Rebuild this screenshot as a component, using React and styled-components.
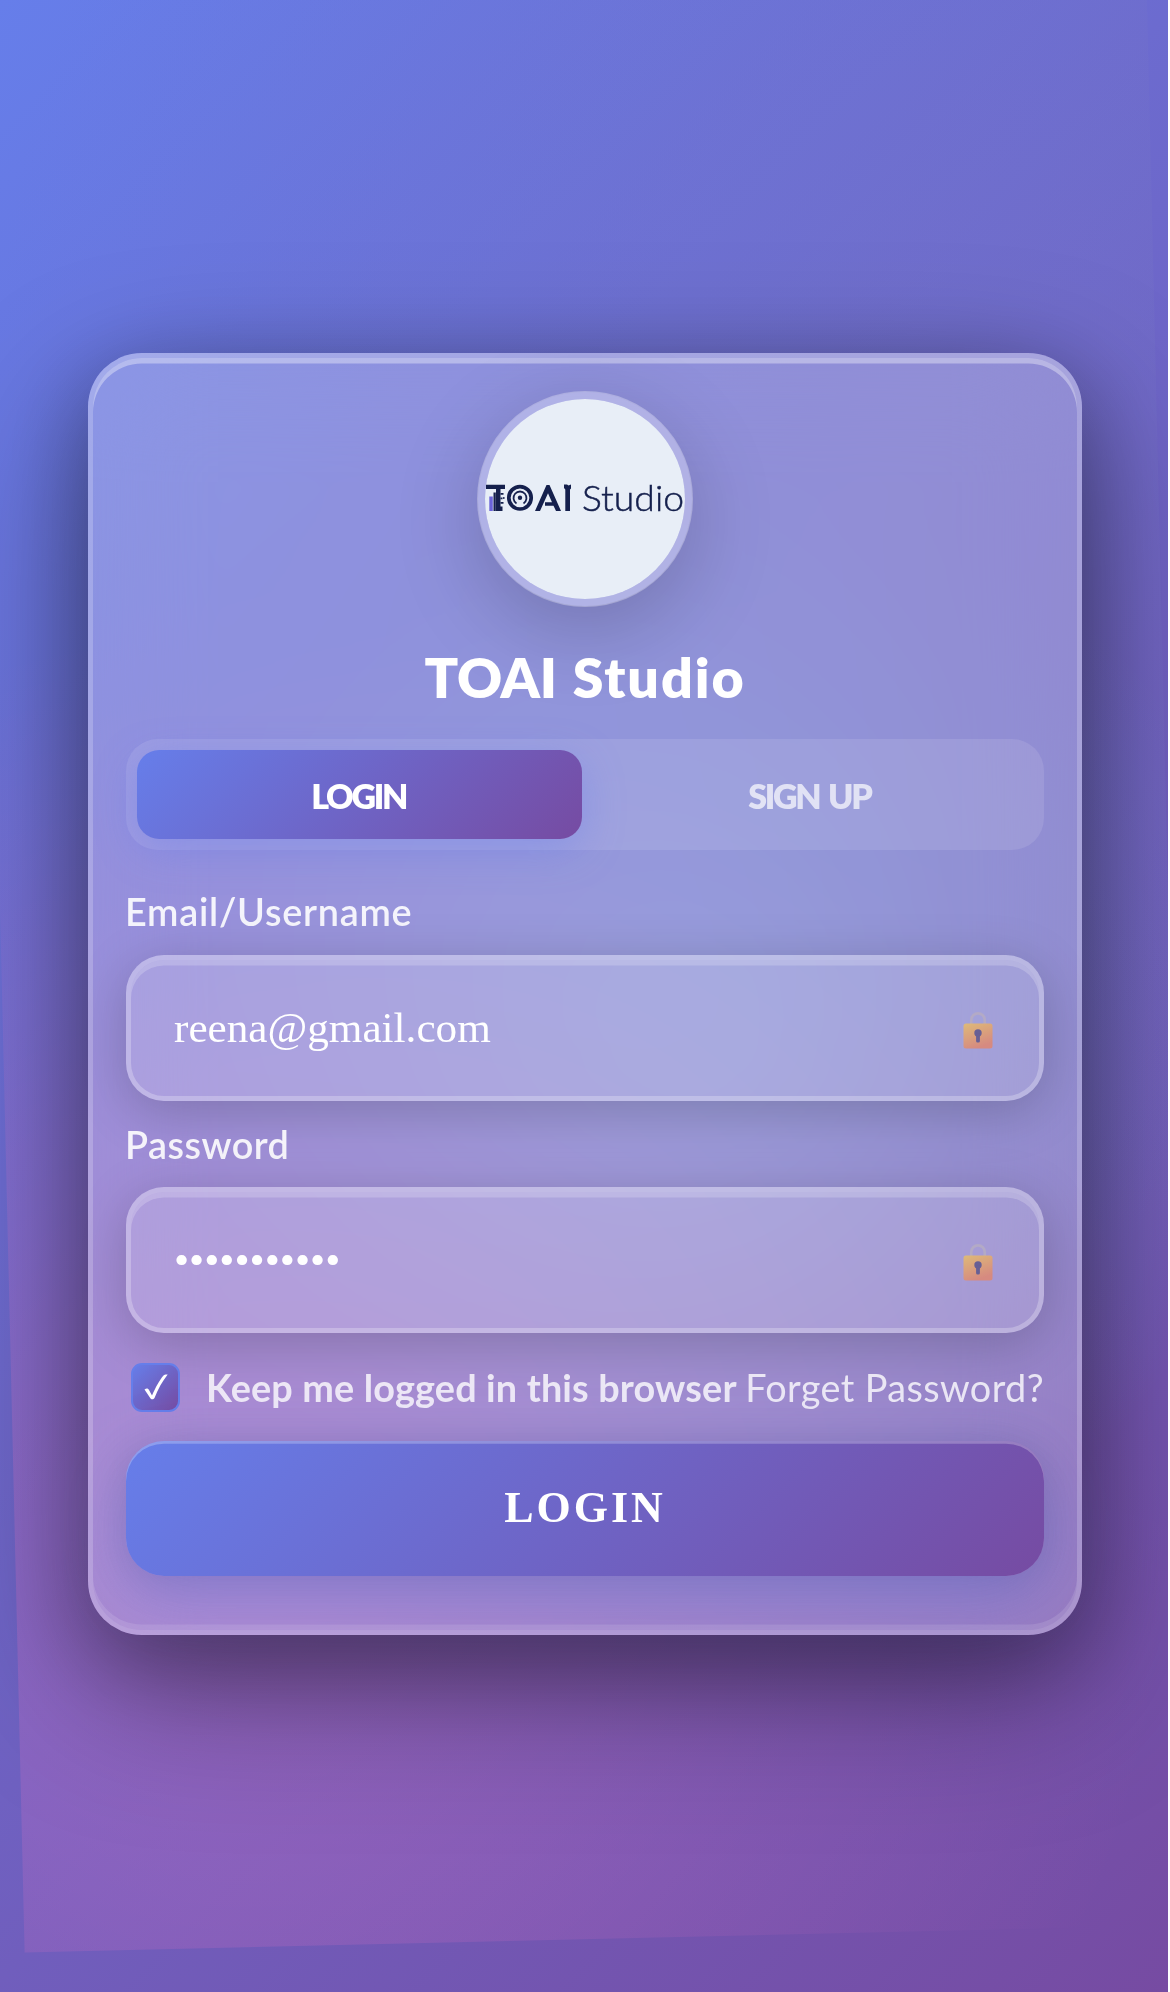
import React, { useState } from "react";
import styled, { createGlobalStyle } from "styled-components";

const sans = `Lato, "Noto Sans", sans-serif`;
const serif = `"Liberation Serif", serif`;
const brand = "linear-gradient(135deg, #667eea 0%, #764ba2 100%)";

const Global = createGlobalStyle`
  * { box-sizing: border-box; }
  body { margin: 0; background: #fff; }
`;

const Page = styled.div`
  position: relative;
  display: flex;
  justify-content: center;
  align-items: flex-start;
  width: 1168px;
  height: 1992px;
  padding: 353px 86px 0 88px;
  overflow: hidden;
  background: ${brand};
  font-family: ${sans};
`;

const Aurora = styled.div`
  position: absolute;
  inset: 0;
  transform: translate(1px, -53px) rotate(-1.35deg);
  background:
    radial-gradient(circle at 20% 80%, rgba(255, 119, 198, 0.27) 0%, transparent 50%),
    radial-gradient(circle at 80% 20%, rgba(120, 119, 198, 0.3) 0%, transparent 50%),
    radial-gradient(circle at 60% 55%, rgba(120, 219, 255, 0.27) 0%, transparent 44%);
`;

const Card = styled.main`
  position: relative;
  display: flex;
  flex-direction: column;
  align-items: center;
  width: 994px;
  height: 1282px;
  padding: 33px;
  border: 5px solid rgba(255, 255, 255, 0.2);
  border-radius: 54px;
  background: rgba(255, 255, 255, 0.23);
  backdrop-filter: blur(54px);
  box-shadow:
    0 22px 86px rgba(0, 0, 0, 0.27),
    0 54px 150px rgba(0, 0, 0, 0.4),
    inset 0 5.4px 0 rgba(255, 255, 255, 0.36),
    inset 0 -5.4px 0 rgba(255, 255, 255, 0.12);
`;

const Avatar = styled.div`
  display: grid;
  place-items: center;
  flex: none;
  width: 216px;
  height: 216px;
  border: 8px solid rgba(255, 255, 255, 0.3);
  border-radius: 50%;
  background: #e8eef7;
  background-clip: padding-box;
  box-shadow: 0 22px 86px rgba(0, 0, 0, 0.2);
`;

const Title = styled.h1`
  display: flex;
  gap: 16px;
  margin: 28px 0 0;
  height: 104px;
  color: #fff;
  font-size: 55.5px;
  font-weight: 800;
  line-height: 84px;
  white-space: nowrap;
`;

const Word = styled.span`
  letter-spacing: ${(p) => p.$track}px;
`;

const Tabs = styled.div`
  display: flex;
  gap: 5.4px;
  width: 100%;
  height: 111px;
  padding: 11px;
  border-radius: 32px;
  background: rgba(255, 255, 255, 0.1);
`;

const Tab = styled.button`
  flex: 1;
  border: 0;
  border-radius: 22px;
  padding: 2px 2px 0 0;
  background: ${(p) => (p.$active ? brand : "transparent")};
  box-shadow: ${(p) => (p.$active ? "0 11px 40px rgba(102, 126, 234, 0.4)" : "none")};
  color: ${(p) => (p.$active ? "#fff" : "rgba(255, 255, 255, 0.7)")};
  font: 800 34px/1 ${sans};
  letter-spacing: -2.3px;
  word-spacing: 3px;
`;

const Field = styled.label`
  display: flex;
  flex-direction: column;
  justify-content: space-between;
  width: 100%;
  height: ${(p) => p.$height}px;
  margin-top: ${(p) => p.$gap}px;
`;

const Caption = styled.span`
  margin-left: -1px;
  color: rgba(255, 255, 255, 0.9);
  font-size: 37.8px;
  font-weight: 600;
  line-height: 50px;
  letter-spacing: ${(p) => p.$track}px;
`;

const Box = styled.span`
  display: flex;
  align-items: center;
  height: 146px;
  padding: 0 46px 0 43px;
  border: 5px solid rgba(255, 255, 255, 0.25);
  border-radius: 38px;
  background: rgba(255, 255, 255, 0.15);
  box-shadow:
    0 11px 54px rgba(0, 0, 0, 0.2),
    inset 0 5.4px 0 rgba(255, 255, 255, 0.2);
`;

const Input = styled.input`
  flex: 1;
  min-width: 0;
  height: 54px;
  padding: 0;
  border: 0;
  outline: 0;
  background: transparent;
  color: #fff;
  font: 400 43.2px/54px ${serif};
`;

const LockIcon = styled.svg`
  flex: none;
  width: 30px;
  height: 38px;
  margin-top: 3px;
`;

const Options = styled.div`
  display: flex;
  align-items: center;
  width: 100%;
  height: 50px;
  margin-top: 29px;
  padding-left: 5px;
  color: rgba(255, 255, 255, 0.8);
  font-size: 37.8px;
  line-height: 50px;
  white-space: nowrap;
`;

const Check = styled.span`
  display: grid;
  place-items: center;
  flex: none;
  width: 49px;
  height: 49px;
  margin-right: 26px;
  border: 2.7px solid #667eea;
  border-radius: 11px;
  background: ${brand};
`;

const Keep = styled.span`
  padding-top: 2px;
  width: 539.5px;
  font-weight: 700;
  letter-spacing: 0.15px;
`;

const Forgot = styled.a`
  padding-top: 2px;
  font-weight: 400;
  letter-spacing: 0.4px;
`;

const Submit = styled.button`
  width: 100%;
  height: 135px;
  flex: none;
  margin-top: 29px;
  padding: 0 0 1px;
  border: 0;
  border-radius: 38px;
  background: ${brand};
  box-shadow:
    0 22px 68px rgba(102, 126, 234, 0.4),
    0 5px 40px rgba(0, 0, 0, 0.15),
    inset 0 2.7px 0 rgba(255, 255, 255, 0.25);
  color: #fff;
  font: 700 44px/1 ${serif};
  letter-spacing: 3px;
`;

const navy = "#15204d";

const Logo = () => (
  <svg width="200" height="60" viewBox="0 -12 200 60" aria-label="TOAI Studio">
    <g fill={navy}>
      <path d="M1 3.700h19v4.300H1zM8.500 11.500h2.300V30H8.500zM11 8h4.500v22H11z" />
      <path d="M15 25.500h2.500V30H15zM15.500 12h3v1.700h-3zM15.500 16.500h2v1.700h-2zM15.500 21h3v1.700h-3z" />
      <circle cx="18.800" cy="17" r="0.900" />
    </g>
    <path d="M4.300 15.500h3.500V30H4.300z" fill="#6a63d8" />
    <g fill="none" stroke={navy}>
      <circle cx="35" cy="16.800" r="11.200" strokeWidth="3.700" />
      <path d="M31.500 22.500a6.500 6.500 0 1 1 7 0" strokeWidth="1.800" />
    </g>
    <circle cx="35" cy="16.800" r="2.200" fill={navy} />
    <path
      d="M50 30 61.500 4h3L76 30h-5l-2.500-5.200H60v-3.600h7l-4-9L55 30z"
      fill={navy}
    />
    <path d="M79 3.500h3l1.500 1 2.500-1v4l-1 1V30h-4.700V8.500L79 7z" fill={navy} />
    <text
      x="97"
      y="29.500"
      fill={navy}
      stroke={navy}
      strokeWidth="0.500"
      fontFamily={sans}
      fontSize="36"
      fontWeight="300"
      textLength="102"
      lengthAdjust="spacingAndGlyphs"
    >
      Studio
    </text>
  </svg>
);

const Lock = ({ id }) => (
  <LockIcon viewBox="0 0 30 38" aria-hidden="true">
    <defs>
      <linearGradient id={id} x1="0" y1="0" x2="0.400" y2="1">
        <stop offset="0" stopColor="#deba78" />
        <stop offset="1" stopColor="#d68a80" />
      </linearGradient>
    </defs>
    <path d="M8.300 13.500V9a6.700 6.700 0 0 1 13.400 0v4.500" fill="none" stroke="#b3aac6" strokeWidth="2.700" />
    <rect x="0.500" y="12.500" width="29" height="25" rx="2.500" fill={`url(#${id})`} />
    <circle cx="15" cy="22" r="3.700" fill="#675f95" />
    <rect x="13.100" y="22" width="3.800" height="9.500" rx="1.500" fill="#675f95" />
  </LockIcon>
);

const Tick = () => (
  <svg width="26" height="28" viewBox="0 0 26 28" aria-hidden="true">
    <path
      d="M1.500 16.500c2-1.500 3.500-1.500 4.500.5l3 5.500C12.500 14.500 16.500 7 20.500 2.500c1.200-1.200 2.500-1.200 4.200-1C19.500 8 15 16 11.500 25c-1 1.700-3.500 1.700-4.300 0z"
      fill="#fff"
    />
  </svg>
);

export default function App() {
  const [email, setEmail] = useState("reena@gmail.com");
  const [password, setPassword] = useState("password123");
  return (
    <>
      <Global />
      <Page>
        <Aurora />
        <Card>
          <Avatar>
            <Logo />
          </Avatar>
          <Title>
            <Word $track={-0.3}>TOAI</Word>
            <Word $track={1.9}>Studio</Word>
          </Title>
          <Tabs>
            <Tab $active>LOGIN</Tab>
            <Tab>SIGN UP</Tab>
          </Tabs>
          <Field $height={214} $gap={37}>
            <Caption $track={0.75}>Email/Username</Caption>
            <Box>
              <Input value={email} onChange={(e) => setEmail(e.target.value)} />
              <Lock id="lock-email" />
            </Box>
          </Field>
          <Field $height={213} $gap={19}>
            <Caption $track={0.5}>Password</Caption>
            <Box>
              <Input type="password" value={password} onChange={(e) => setPassword(e.target.value)} />
              <Lock id="lock-password" />
            </Box>
          </Field>
          <Options>
            <Check>
              <Tick />
            </Check>
            <Keep>Keep me logged in this browser</Keep>
            <Forgot>Forget Password?</Forgot>
          </Options>
          <Submit>LOGIN</Submit>
        </Card>
      </Page>
    </>
  );
}
